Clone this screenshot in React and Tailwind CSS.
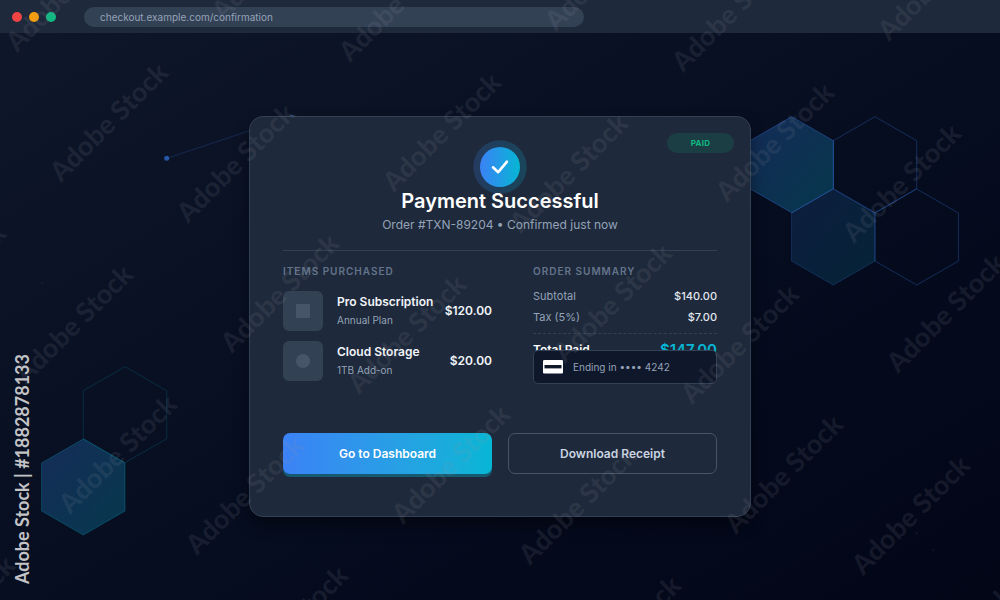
const items = [
    { name: 'Pro Subscription', detail: 'Annual Plan', price: '$120.00', shape: 'square' },
    { name: 'Cloud Storage', detail: '1TB Add-on', price: '$20.00', shape: 'circle' },
];

const summary = [
    { label: 'Subtotal', value: '$140.00' },
    { label: 'Tax (5%)', value: '$7.00' },
];

// Start points of the diagonal marks, two per cell of a slanted grid
const marks = [];
for (let row = -2; row < 4; row++) {
    for (let col = -2; col < 4; col++) {
        const x = 17 + col * 333 + row * 171;
        const y = 53 + col * 10 + row * 171;
        marks.push({ x, y }, { x: x + 44, y: y + 130 });
    }
}
const visibleMarks = marks.filter(({ x, y }) => x > -120 && x < 1000 && y > 0 && y < 720);

function Hexagon({ x, y, ...props }) {
    const points = [
        [x, y],
        [x + 41.7, y + 24],
        [x + 41.7, y + 72],
        [x, y + 96],
        [x - 41.7, y + 72],
        [x - 41.7, y + 24],
    ];
    return <polygon points={points.map((p) => p.join(',')).join(' ')} {...props} />;
}

function Backdrop() {
    return (
        <svg
            className="absolute inset-0 h-full w-full"
            viewBox="0 0 1000 600"
            preserveAspectRatio="xMidYMid slice"
            aria-hidden="true"
        >
            <defs>
                <linearGradient id="hex" x1="0" y1="0" x2="1" y2="1">
                    <stop offset="0" stopColor="#3b82f6" />
                    <stop offset="1" stopColor="#06b6d4" />
                </linearGradient>
            </defs>
            <Hexagon x={791.7} y={116.7} fill="url(#hex)" fillOpacity="0.25" stroke="#3b82f6" strokeOpacity="0.35" />
            <Hexagon x={875} y={116.7} fill="none" stroke="#3b82f6" strokeOpacity="0.28" />
            <Hexagon x={833.3} y={189} fill="url(#hex)" fillOpacity="0.14" stroke="#3b82f6" strokeOpacity="0.22" />
            <Hexagon x={916.7} y={189} fill="none" stroke="#3b82f6" strokeOpacity="0.28" />
            <Hexagon x={125} y={366.7} fill="none" stroke="#06b6d4" strokeOpacity="0.18" />
            <Hexagon x={83.3} y={439} fill="url(#hex)" fillOpacity="0.25" stroke="#06b6d4" strokeOpacity="0.25" />
            <path d="M166.7 158.3 291.7 116.7" stroke="#3b82f6" strokeOpacity="0.2" />
            <circle cx="166.7" cy="158.3" r="2.5" fill="#3b82f6" fillOpacity="0.6" />
            <circle cx="291.7" cy="117" r="2" fill="#3b82f6" fillOpacity="0.6" />
            <g fill="#ffffff" fillOpacity="0.07">
                <circle cx="41.7" cy="283.3" r="1" />
                <circle cx="916.7" cy="533.3" r="1" />
                <circle cx="933.3" cy="550" r="1" />
            </g>
        </svg>
    );
}

function Watermark() {
    return (
        <div
            className="pointer-events-none absolute inset-0 overflow-hidden font-['Lato','Noto_Sans',sans-serif] whitespace-nowrap"
            aria-hidden="true"
        >
            {visibleMarks.map(({ x, y }) => (
                <span
                    key={`${x}-${y}`}
                    className="absolute origin-bottom-left -rotate-45 text-[27px] leading-5 font-black text-[#9394a0]/12"
                    style={{ left: x, top: y - 20 }}
                >
                    Adobe Stock
                </span>
            ))}
            <span className="absolute bottom-4 left-3 rotate-180 text-[18px] leading-5 font-bold text-[#c3c3c6] [writing-mode:vertical-rl]">
                Adobe Stock | #1882878133
            </span>
        </div>
    );
}

function SuccessIcon() {
    return (
        <svg className="-mb-[7px] h-[54px] w-[54px]" viewBox="0 0 54 54" aria-hidden="true">
            <defs>
                <linearGradient id="success">
                    <stop offset="0" stopColor="#3b82f6" />
                    <stop offset="1" stopColor="#06b6d4" />
                </linearGradient>
            </defs>
            <circle cx="27" cy="27" r="26.7" fill="url(#success)" fillOpacity="0.2" />
            <circle cx="27" cy="27" r="20" fill="url(#success)" />
            <path
                d="M20 27.3 25.2 32.2 34 21.7"
                fill="none"
                stroke="#fff"
                strokeWidth="2.6"
                strokeLinecap="round"
                strokeLinejoin="round"
            />
        </svg>
    );
}

function BrowserBar() {
    return (
        <header className="relative flex h-[33px] items-center bg-[#1e293b]">
            <div className="ml-3 flex gap-[7px]">
                <span className="size-[10px] rounded-full bg-[#ef4444]" />
                <span className="size-[10px] rounded-full bg-[#f59e0b]" />
                <span className="size-[10px] rounded-full bg-[#10b981]" />
            </div>
            <input
                type="text"
                aria-label="Address"
                readOnly
                value="checkout.example.com/confirmation"
                className="ml-7 h-5 w-1/2 rounded-full bg-[#334155] px-4 text-[10px] text-[#94a3b8] outline-none"
            />
        </header>
    );
}

export default function App() {
    return (
        <div className="relative flex min-h-screen flex-col overflow-hidden bg-linear-to-br from-[#0f172a] to-[#020617] font-['Inter',sans-serif]">
            <Backdrop />
            <BrowserBar />

            <main className="relative flex flex-1 items-center justify-center">
                <section className="relative w-full max-w-[502px] rounded-[14px] border border-[#334155] bg-[#1e293b] px-[33px] pt-[23px] pb-[42px] shadow-[0_8px_16px_rgba(0,0,0,0.4)]">
                    <span className="absolute top-4 right-4 flex h-5 w-[67px] items-center justify-center rounded-full bg-[#10b981]/15 text-[8px] font-bold tracking-wide text-[#10b981]">
                        PAID
                    </span>

                    <div className="flex flex-col items-center border-b border-[#334155] pb-[17px]">
                        <SuccessIcon />
                        <h1 className="relative text-[20px] leading-7 font-semibold text-white">Payment Successful</h1>
                        <p className="mt-0.5 text-[12px] leading-4 text-[#94a3b8]">
                            Order #TXN-89204 • Confirmed just now
                        </p>
                    </div>

                    <div className="mt-3 grid grid-cols-2 gap-4">
                        <div>
                            <h2 className="text-[10px] leading-4 font-semibold tracking-widest text-[#64748b]">
                                ITEMS PURCHASED
                            </h2>
                            <ul className="mt-3 space-y-2.5">
                                {items.map((item) => (
                                    <li key={item.name} className="flex items-center">
                                        <span className="flex size-10 shrink-0 items-center justify-center rounded-md bg-[#334155]">
                                            <span
                                                className={
                                                    item.shape === 'circle'
                                                        ? 'size-3.5 rounded-full bg-[#475569]'
                                                        : 'size-3.5 bg-[#475569]'
                                                }
                                            />
                                        </span>
                                        <div className="ml-3.5 flex-1 whitespace-nowrap">
                                            <h3 className="text-[12px] leading-4 font-semibold text-[#f1f5f9]">{item.name}</h3>
                                            <p className="mt-0.5 text-[10px] leading-4 text-[#94a3b8]">{item.detail}</p>
                                        </div>
                                        <span className="text-[12px] leading-4 font-semibold text-[#f1f5f9]">
                                            {item.price}
                                        </span>
                                    </li>
                                ))}
                            </ul>
                        </div>

                        <div className="pl-[25px]">
                            <h2 className="text-[10px] leading-4 font-semibold tracking-widest text-[#64748b]">
                                ORDER SUMMARY
                            </h2>
                            <dl className="mt-[9px] space-y-[5px] text-[11px] leading-4">
                                {summary.map((row) => (
                                    <div key={row.label} className="flex justify-between">
                                        <dt className="text-[#94a3b8]">{row.label}</dt>
                                        <dd className="font-medium text-[#e2e8f0]">{row.value}</dd>
                                    </div>
                                ))}
                            </dl>
                            <div className="mt-2 flex items-center justify-between border-t border-dashed border-[#334155] pt-1.5 leading-5">
                                <span className="text-[12px] font-semibold text-white">Total Paid</span>
                                <span className="text-[15px] font-semibold text-[#06b6d4]">$147.00</span>
                            </div>
                            <div className="relative -mt-2.5 flex h-[34px] items-center rounded-[5px] border border-[#334155] bg-[#0f172a] pl-[9px]">
                                <svg className="h-[14px] w-5" viewBox="0 0 20 14" aria-hidden="true">
                                    <rect width="20" height="13.4" rx="1.2" fill="#fff" />
                                    <rect x="1.5" y="5" width="17" height="3.4" fill="#0f172a" />
                                </svg>
                                <span className="ml-2.5 text-[10px] leading-4 text-[#94a3b8]">Ending in •••• 4242</span>
                            </div>
                        </div>
                    </div>

                    <div className="mt-[49px] grid grid-cols-2 gap-4">
                        <button
                            type="button"
                            className="h-[41px] rounded-[7px] bg-linear-to-r from-[#3b82f6] to-[#06b6d4] text-[12px] font-semibold text-white shadow-[0_3px_0_rgba(6,182,212,0.35)]"
                        >
                            Go to Dashboard
                        </button>
                        <button
                            type="button"
                            className="h-[41px] rounded-[7px] border border-[#475569] text-[12px] font-semibold text-[#cbd5e1]"
                        >
                            Download Receipt
                        </button>
                    </div>
                </section>
            </main>

            <Watermark />
        </div>
    );
}
